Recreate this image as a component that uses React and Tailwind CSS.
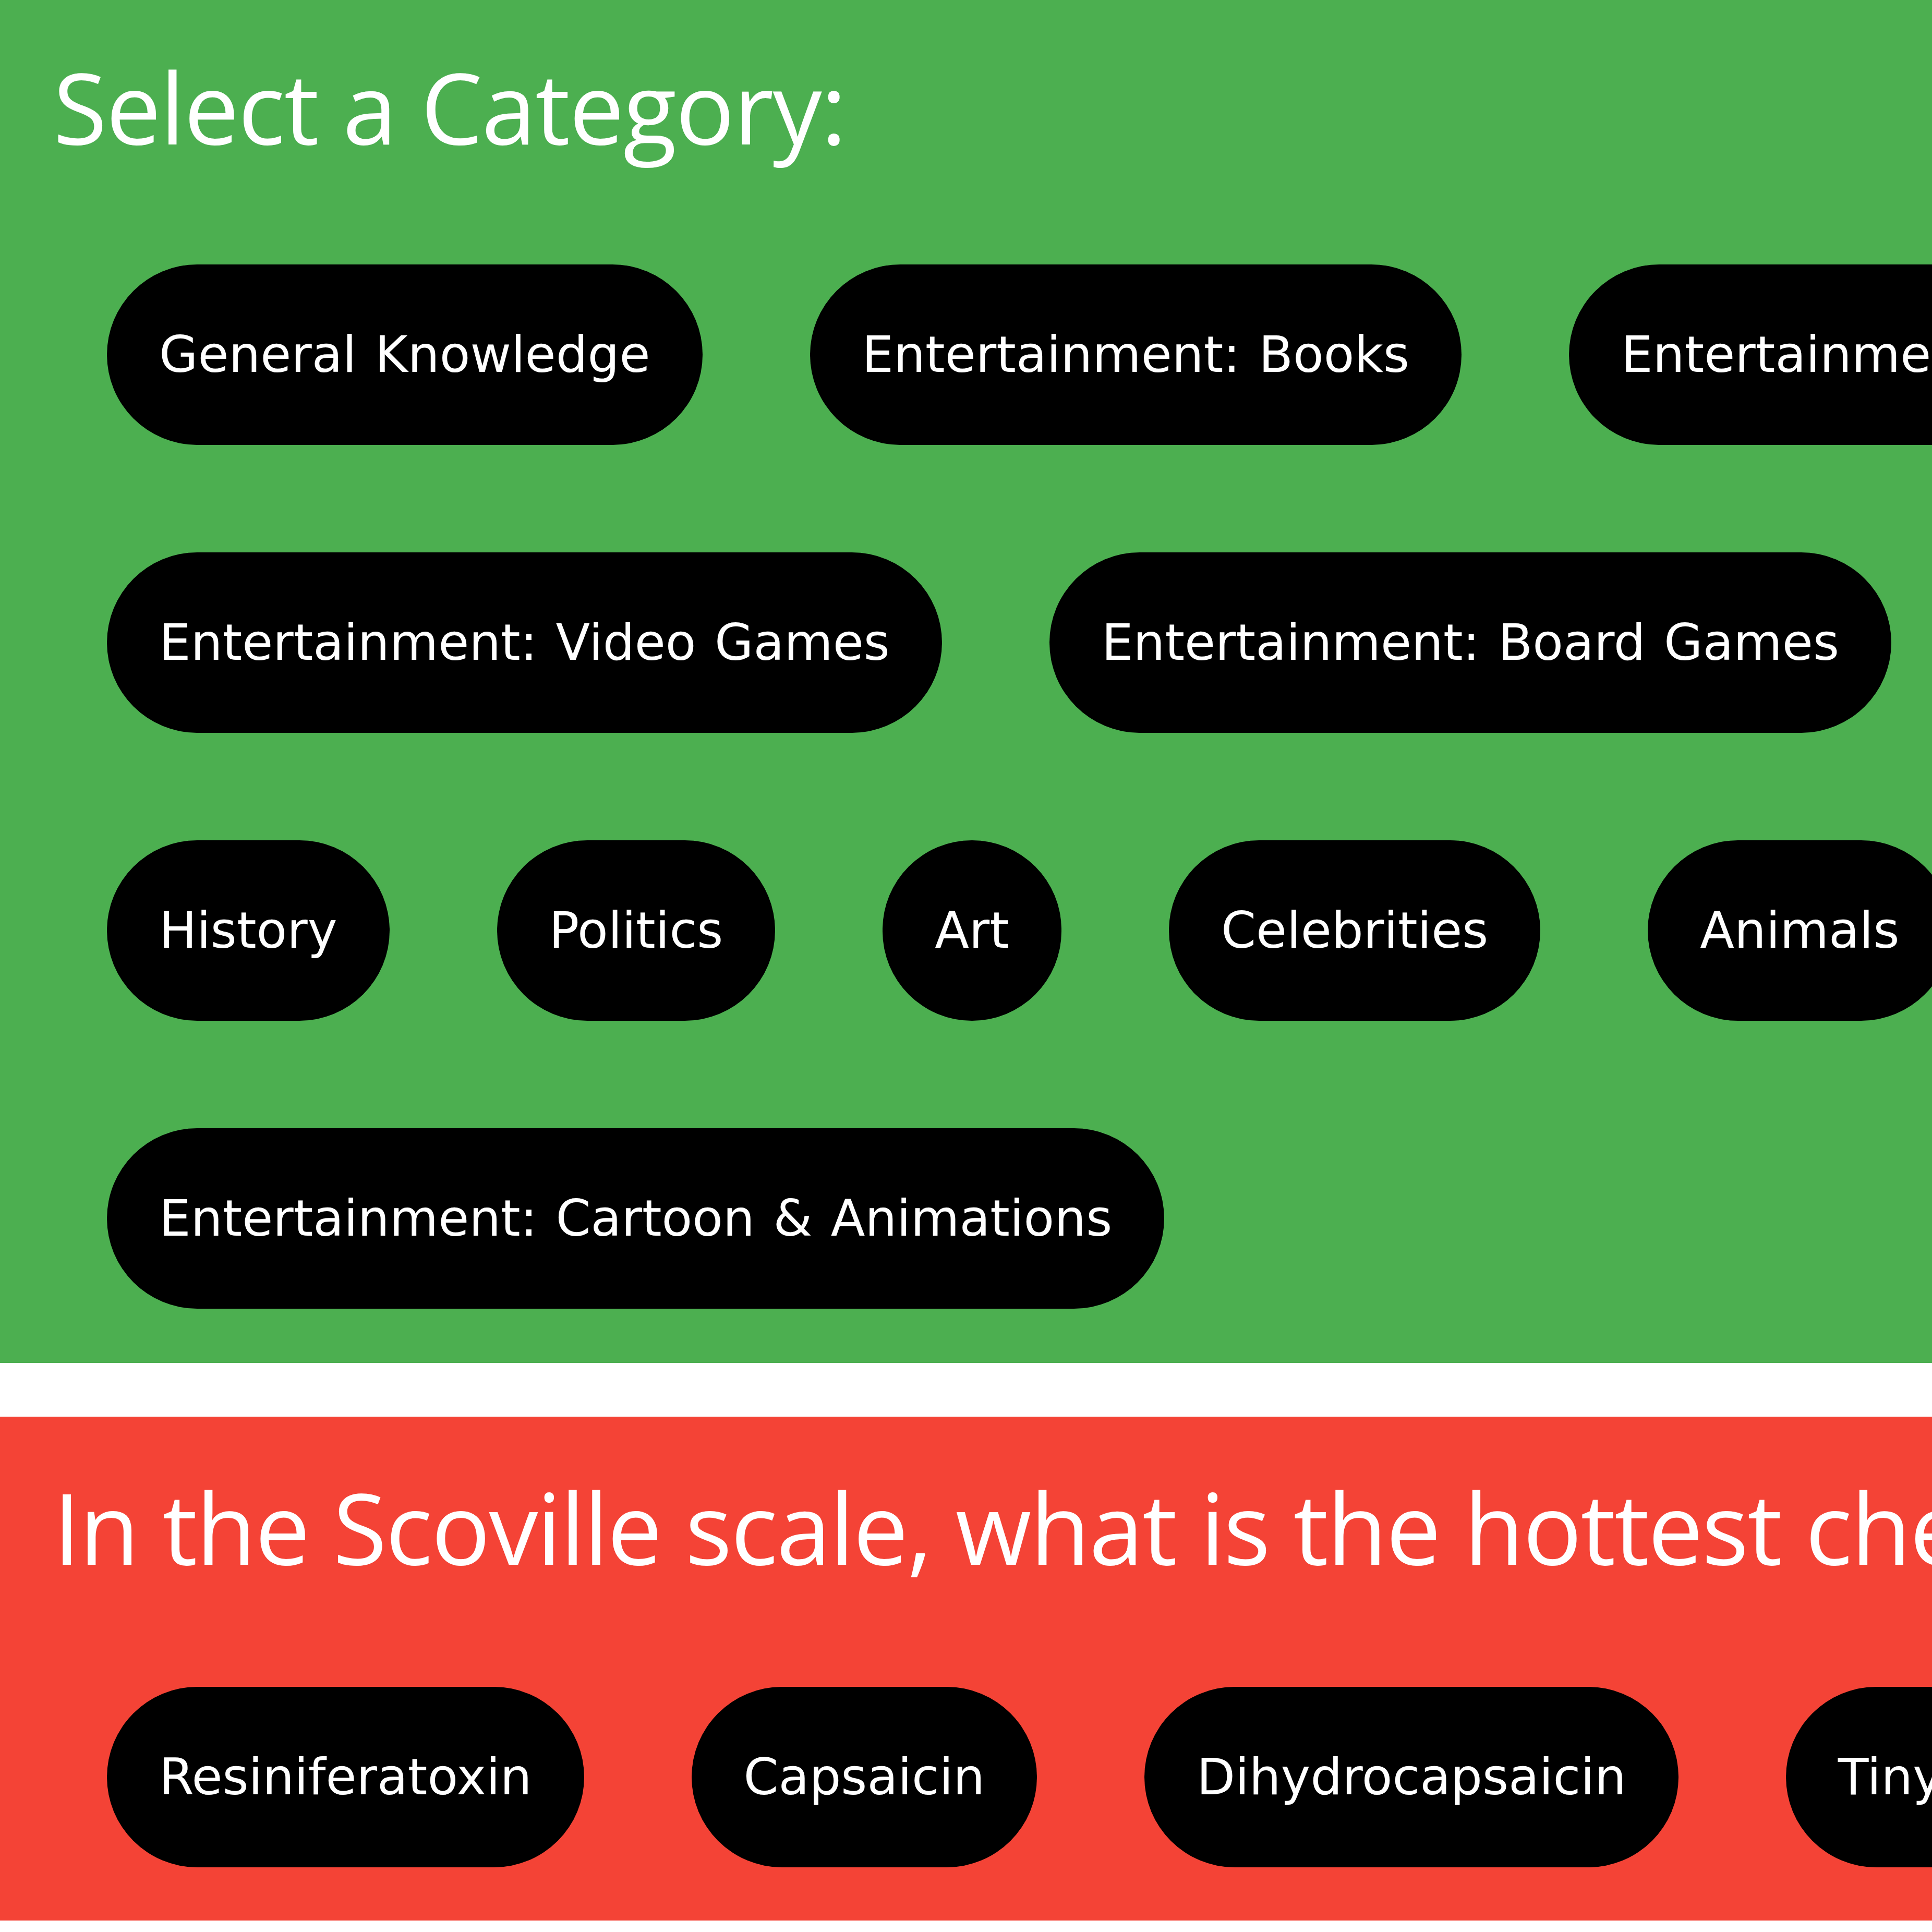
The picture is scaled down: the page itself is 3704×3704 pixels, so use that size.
import { useState } from "react"

const categoryRows = [
    ["General Knowledge", "Entertainment: Books", "Entertainment: Film"],
    ["Entertainment: Video Games", "Entertainment: Board Games"],
    ["History", "Politics", "Art", "Celebrities", "Animals"],
    ["Entertainment: Cartoon & Animations"],
]

const answers = ["Resiniferatoxin", "Capsaicin", "Dihydrocapsaicin", "Tinyatoxin"]

const Pill = ({ label, onClick }) => {
    return (
        <button
            className="shrink-0 flex items-center h-[346px] px-[100px] rounded-full bg-black text-white text-[96px] leading-none whitespace-nowrap [word-spacing:5px] font-['DejaVu_Sans',sans-serif] cursor-pointer"
            onClick={onClick}
        >
            {label}
        </button>
    )
}

const App = () => {

    const [category, setCategory] = useState(null)

    return (
        <div className="w-full overflow-hidden">

            {/* Category picker */}
            <section className="bg-[#4caf50] pt-[110px] pl-[102px] pb-[104px]">
                <h1 className="text-white text-[188px] leading-none font-normal tracking-[-1.8px] whitespace-nowrap font-['Open_Sans',sans-serif]">
                    Select a Category:
                </h1>

                <div className="mt-[209px] pl-[103px] flex flex-col gap-[206px]">
                    {categoryRows.map((row, i) => (
                        <div key={i} className="flex flex-row gap-[206px]">
                            {row.map(name => (
                                <Pill key={name} label={name} onClick={() => setCategory(name)} />
                            ))}
                        </div>
                    ))}
                </div>
            </section>

            {/* Question */}
            <section className="mt-[103px] bg-[#f44336] pt-[117px] pl-[102px] pb-[102px]">
                <h1 className="text-white text-[188px] leading-none font-normal tracking-[-2.4px] whitespace-nowrap font-['Open_Sans',sans-serif]">
                    In the Scoville scale, what is the hottest chemical?
                </h1>

                <div className="mt-[213px] pl-[103px] flex flex-row gap-[206px]">
                    {answers.map(a => (
                        <Pill key={a} label={a} />
                    ))}
                </div>
            </section>
        </div>
    )
}

export default App
